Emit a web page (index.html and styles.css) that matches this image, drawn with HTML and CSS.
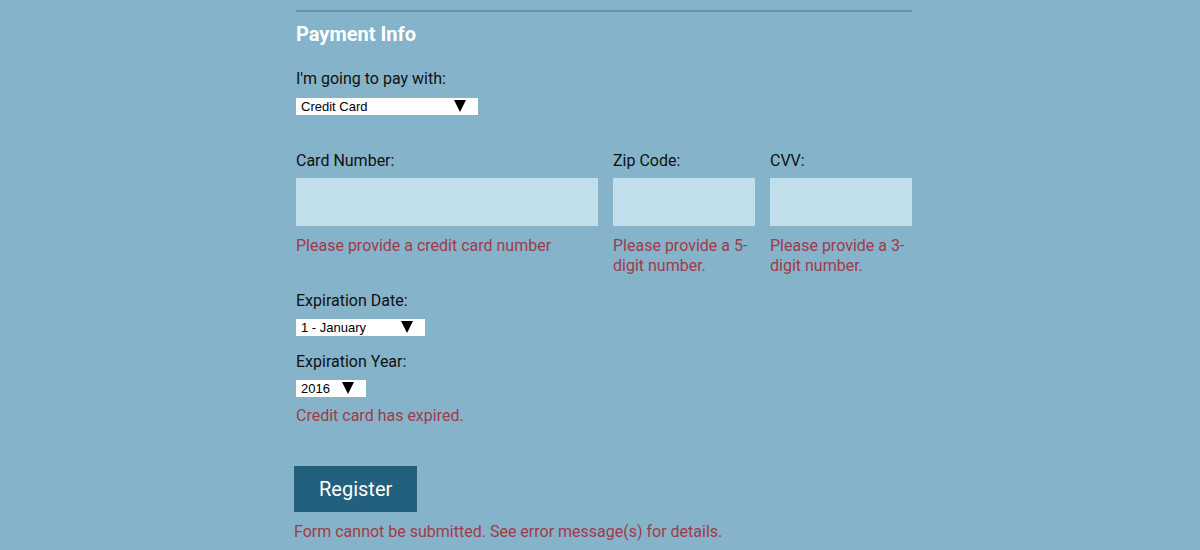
FILE: index.html
```html
<!DOCTYPE html>
<html lang="en">
<head>
<meta charset="utf-8">
<title>Payment Info</title>
<link rel="stylesheet" href="styles.css">
</head>
<body>
<div class="page">
  <div class="rule"></div>
  <h2 class="section-title">Payment Info</h2>

  <label class="field-label label-pay" for="payment">I'm going to pay with:</label>
  <div class="select-wrap select-payment">
    <select id="payment" class="select"><option>Credit Card</option></select>
    <svg class="select-arrow" viewBox="0 0 12 12" width="12" height="12"><polygon points="0,0 12,0 6,12" fill="#000"/></svg>
  </div>

  <div class="card-row">
    <div class="card-col">
      <label class="field-label" for="cc-num">Card Number:</label>
      <input id="cc-num" class="text-input" type="text">
      <p class="error">Please provide a credit card number</p>
    </div>
    <div class="card-col">
      <label class="field-label" for="zip">Zip Code:</label>
      <input id="zip" class="text-input" type="text">
      <p class="error">Please provide a 5-digit number.</p>
    </div>
    <div class="card-col">
      <label class="field-label" for="cvv">CVV:</label>
      <input id="cvv" class="text-input" type="text">
      <p class="error">Please provide a 3-digit number.</p>
    </div>
  </div>

  <label class="field-label label-exp" for="exp-month">Expiration Date:</label>
  <div class="select-wrap select-month">
    <select id="exp-month" class="select"><option>1 - January</option></select>
    <svg class="select-arrow" viewBox="0 0 12 12" width="12" height="12"><polygon points="0,0 12,0 6,12" fill="#000"/></svg>
  </div>

  <label class="field-label label-year" for="exp-year">Expiration Year:</label>
  <div class="select-wrap select-year">
    <select id="exp-year" class="select"><option>2016</option></select>
    <svg class="select-arrow" viewBox="0 0 12 12" width="12" height="12"><polygon points="0,0 12,0 6,12" fill="#000"/></svg>
  </div>
  <p class="error error-expired">Credit card has expired.</p>

  <div class="submit-area">
    <button class="btn-register" type="submit">Register</button>
    <p class="error error-form">Form cannot be submitted. See error message(s) for details.</p>
  </div>
</div>
</body>
</html>
```
FILE: styles.css
```css
html, body {
  margin: 0;
  padding: 0;
}
body {
  background: #84b3ca;
  font-family: Roboto, "Liberation Sans", Arial, sans-serif;
  color: #111;
  height: 550px;
  overflow: hidden;
}
.page {
  width: 616px;
  margin: 0 auto;
  padding-left: 8px;
  padding-top: 10px;
  display: flex;
  flex-direction: column;
  align-items: flex-start;
}
.rule {
  align-self: stretch;
  height: 2px;
  background: #6497b0;
}
.section-title {
  margin: 10px 0 0;
  font-size: 20px;
  line-height: 24px;
  font-weight: 700;
  color: #fff;
}
.field-label {
  display: block;
  font-size: 16px;
  line-height: 20px;
  color: #111;
  margin-top: 25px;
}
.label-pay { margin-top: 23px; }
.select-wrap {
  position: relative;
  margin-top: 8px;
  height: 17px;
  background: #fff;
}
.select-payment { margin-top: 9px; }
.select {
  -webkit-appearance: none;
  appearance: none;
  border: 0;
  outline: 0;
  margin: 0;
  width: 100%;
  height: 17px;
  padding: 0 0 0 5px;
  background: transparent;
  font-family: "Liberation Sans", Arial, sans-serif;
  font-size: 13px;
  line-height: 17px;
  color: #000;
  display: block;
}
.select-arrow {
  position: absolute;
  top: 2px;
  right: 12px;
  width: 12px;
  height: 12px;
  pointer-events: none;
}
.select-payment { width: 182px; }
.select-month { width: 129px; }
.select-year { width: 70px; }

.card-row {
  display: flex;
  gap: 15px;
  align-self: stretch;
  margin-top: 36px;
}
.card-row .field-label { margin-top: 0; }
.card-col { display: flex; flex-direction: column; }
.card-col:first-child { width: 302px; }
.card-col:nth-child(2), .card-col:nth-child(3) { width: 142px; }
.text-input {
  display: block;
  box-sizing: border-box;
  width: 100%;
  height: 48px;
  margin-top: 7px;
  border: 0;
  outline: 0;
  padding: 0 10px;
  background: #c1dfea;
  font-family: inherit;
  font-size: 16px;
}
.error {
  margin: 10px 0 0;
  font-size: 16px;
  line-height: 19.5px;
  color: #a13b48;
}
.label-exp { margin-top: 16px; }
.label-year { margin-top: 16px; }
.error-expired { margin-top: 9px; }

.submit-area {
  margin-left: -2px;
  margin-top: 40px;
}
.btn-register {
  display: block;
  border: 0;
  margin: 0;
  background: #22607d;
  color: #fff;
  font-family: Roboto, "Liberation Sans", Arial, sans-serif;
  font-size: 20px;
  line-height: 24px;
  padding: 11px 25px 11px 25px;
  cursor: pointer;
}
.error-form { margin-top: 10px; }
```
